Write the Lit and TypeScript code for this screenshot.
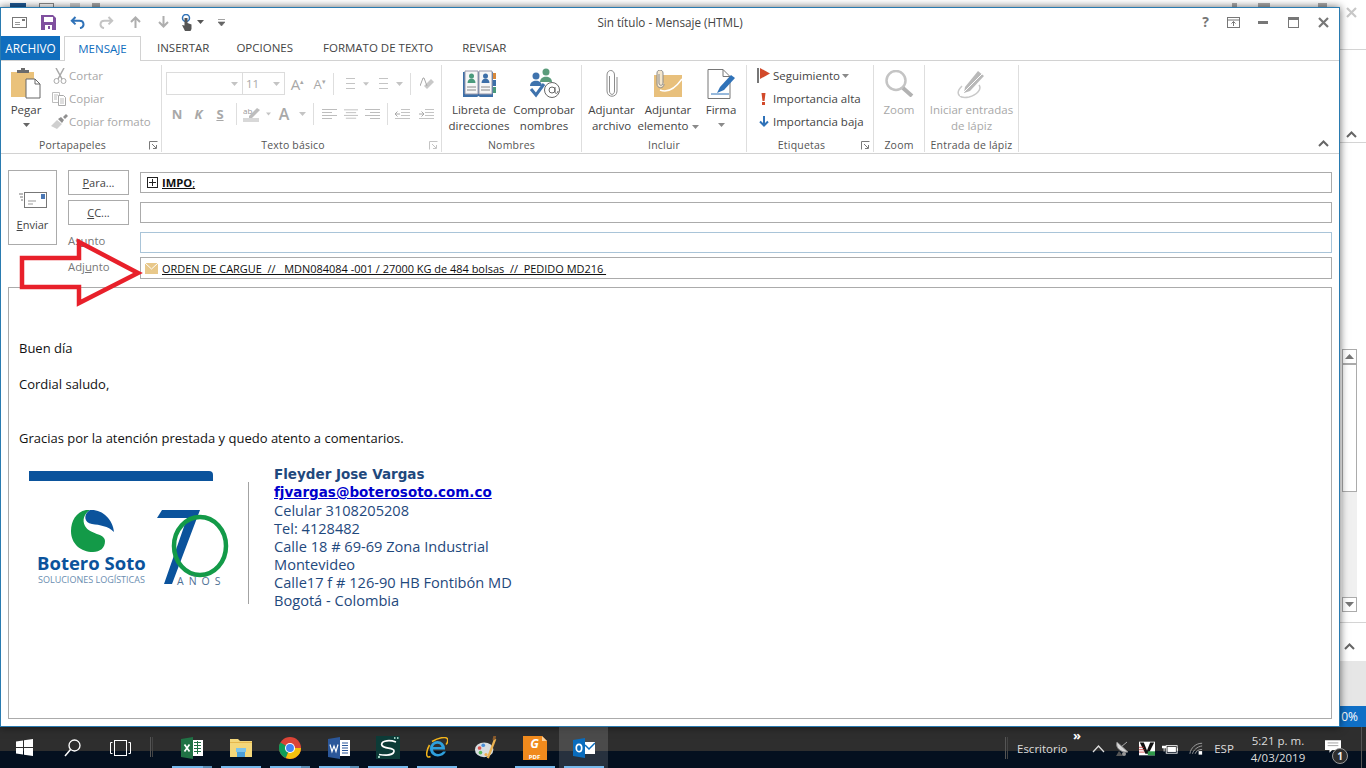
import {LitElement, html, css} from 'lit';
import {customElement} from 'lit/decorators.js';

const caret = (c = '#8a8a8a') => html`<svg class="caret" width="7" height="4" viewBox="0 0 7 4"><path d="M0 0h7L3.5 4z" fill=${c}/></svg>`;
const lightCaret = caret('#c4c4c4');

const launcher = (c = '#7a7a7a') => html`<svg class="launch" width="9" height="9" viewBox="0 0 9 9"><path d="M.5 8.5v-8h8M3 3l4 4M4 7.5h3.5V4" fill="none" stroke=${c}/></svg>`;

const chevUp = html`<svg width="11" height="7" viewBox="0 0 11 7"><path d="M1 6l4.5-4.5L10 6" fill="none" stroke="#666" stroke-width="2"/></svg>`;

const qat = {
  mail: html`<svg width="15" height="11" viewBox="0 0 15 11"><rect x=".5" y=".5" width="14" height="10" fill="#fff" stroke="#777"/><rect x="10" y="2" width="3" height="2" fill="#777"/><path d="M3 5.5h5M3 7.5h5" stroke="#999"/></svg>`,
  save: html`<svg width="15" height="15" viewBox="0 0 15 15"><path d="M0 0h12l3 3v12H0z" fill="#80509f"/><rect x="3" y="2" width="9" height="5" fill="#fff"/><rect x="4" y="10" width="7" height="5" fill="#fff"/><rect x="7" y="11" width="2" height="3" fill="#80509f"/></svg>`,
  undo: html`<svg width="15" height="13" viewBox="0 0 15 13"><path d="M5.5 1L1.8 4.7l3.7 3.7M2 4.7h7.5c5 0 5.5 6.5.5 7.5" fill="none" stroke="#2f72b8" stroke-width="2"/></svg>`,
  redo: html`<svg width="15" height="13" viewBox="0 0 15 13"><path d="M9.5 1l3.7 3.7-3.7 3.7M13 4.7H5.500c-5 0-5.500 6.500-.5 7.500" fill="none" stroke="#c4c4c4" stroke-width="2"/></svg>`,
  up: html`<svg width="11" height="12" viewBox="0 0 11 12"><path d="M5.5 12V2M1 6l4.5-4.5L10 6" fill="none" stroke="#aeaeae" stroke-width="2"/></svg>`,
  down: html`<svg width="11" height="12" viewBox="0 0 11 12"><path d="M5.5 0v10M1 6l4.5 4.5L10 6" fill="none" stroke="#aeaeae" stroke-width="2"/></svg>`,
  touch: html`<svg width="12" height="17" viewBox="0 0 12 17"><circle cx="5" cy="4" r="3.5" fill="none" stroke="#2f72b8" stroke-width="1.5"/><path d="M3.5 4h3v5l4 1.500V15l-1 2H4L1 11l2.500.5z" fill="#555"/></svg>`,
  more: html`<svg width="7" height="7" viewBox="0 0 7 7"><path d="M0 .5h7M0 3h7L3.5 7z" fill="#666" stroke="#666" stroke-width=".6"/></svg>`,
};

const ribbon = {
  paste: html`<svg width="30" height="32" viewBox="0 0 30 32"><path d="M0 4h23v25H0z" fill="#eac27b"/><path d="M6 5V2h4V0h4v2h4v3z" fill="#6b6b6b"/><path d="M15 11h9l5 5v14H15z" fill="#fff" stroke="#666"/><path d="M24 11v5h5" fill="none" stroke="#666"/></svg>`,
  cut: html`<svg width="14" height="16" viewBox="0 0 14 16"><path d="M3 0l6 11M11 0L5 11" stroke="#a9a9a9" stroke-width="1.5"/><circle cx="3.5" cy="13" r="2.5" fill="none" stroke="#a9a9a9"/><circle cx="10.5" cy="13" r="2.5" fill="none" stroke="#a9a9a9"/></svg>`,
  copy: html`<svg width="15" height="14" viewBox="0 0 15 14"><path d="M.5.5h7v10h-7z" fill="#fff" stroke="#bdbdbd"/><path d="M6.5 3.5h5l2 2v8h-7z" fill="#fff" stroke="#a9a9a9"/><path d="M2 3h4M2 5h3M2 7h3M8 7h4M8 9h4M8 11h4" stroke="#bdbdbd"/></svg>`,
  brush: html`<svg width="17" height="15" viewBox="0 0 17 15"><path d="M0 12l6-6 5 4-5 5z" fill="#cfcfcf"/><path d="M7 5l3-2 3 3-2 3z" fill="#8f8f8f"/><path d="M12 3l3-3 2 2-3 3z" fill="#8f8f8f"/></svg>`,
  book: html`<svg width="33" height="27" viewBox="0 0 33 27"><path d="M0 2h30v25H17l-1.500-1-1.500 1H0z" fill="#3d6fa8"/><path d="M2 1h13v23H2zM16 1h13v23H16z" fill="#f7f7f7" stroke="#99a"/><circle cx="8.500" cy="6" r="2.500" fill="#4a9a7c"/><path d="M4.500 13c0-6 8-6 8 0z" fill="#4a9a7c"/><circle cx="22.500" cy="6" r="2.500" fill="#3d6fa8"/><path d="M18.500 13c0-6 8-6 8 0z" fill="#3d6fa8"/><path d="M4 17h9M4 20h9M18 17h9M18 20h9" stroke="#888"/><path d="M30 3h3v6h-3z" fill="#d8893b"/><path d="M30 10h3v6h-3z" fill="#3d6fa8"/><path d="M30 17h3v6h-3z" fill="#4a9a7c"/></svg>`,
  check: html`<svg width="31" height="31" viewBox="0 0 31 31"><circle cx="17" cy="4" r="3.5" fill="#5b9c7b"/><path d="M11 14c0-7 12-7 12 0z" fill="#5b9c7b"/><circle cx="7" cy="8" r="3.5" fill="#3f73ad"/><path d="M1 18c0-7 12-7 12 0z" fill="#3f73ad"/><path d="M2 21l5 6 8-11" fill="none" stroke="#3f73ad" stroke-width="3"/><circle cx="23" cy="22" r="7.500" fill="#fff" stroke="#666"/><circle cx="23" cy="22" r="3" fill="none" stroke="#666"/><path d="M26 19v5c0 2 3 2 3-1" fill="none" stroke="#666"/></svg>`,
  clip: html`<svg width="12" height="27" viewBox="0 0 12 27"><path d="M3.500 6v15c0 4.500 5 4.500 5 0V5c0-6-7.500-6-7.500 0v16c0 7 10 7 10 0V7" fill="none" stroke="#8c8c8c"/></svg>`,
  mailclip: html`<svg width="28" height="27" viewBox="0 0 28 27"><path d="M0 5h28v22H0z" fill="#e8c07c"/><path d="M6 20c7 3 14 0 22-11" fill="none" stroke="#fff" stroke-width="1.500"/><path d="M5 4v9c0 3 4 3 4 0V3C9-1 3-1 3 3v11c0 5 7 5 7 0" fill="#f4e6cc" stroke="#8c8c8c"/></svg>`,
  sign: html`<svg width="28" height="30" viewBox="0 0 28 30"><path d="M1 .5h15l7 7v22H1z" fill="#fff" stroke="#777"/><path d="M16 .5v7h7" fill="none" stroke="#777"/><path d="M4 25h18" stroke="#2f72b8"/><path d="M10 24l3-6L24 6l4 3-11 12z" fill="#2f72b8"/></svg>`,
  flag: html`<svg width="13" height="15" viewBox="0 0 13 15"><rect width="2" height="15" fill="#777"/><path d="M3 0l10 5.500L3 11z" fill="#d2492a"/></svg>`,
  high: html`<svg width="5" height="12" viewBox="0 0 5 12"><path d="M.5 0h4l-1 8h-2z" fill="#d2492a"/><rect x="1" y="9" width="3" height="3" fill="#d2492a"/></svg>`,
  low: html`<svg width="10" height="11" viewBox="0 0 10 11"><path d="M5 0v9M1 5.500l4 4 4-4" fill="none" stroke="#2f72b8" stroke-width="2"/></svg>`,
  zoom: html`<svg width="29" height="27" viewBox="0 0 29 27"><circle cx="11" cy="10.500" r="9.500" fill="#fff" stroke="#c4c4c4" stroke-width="2.500"/><path d="M18 18l9 8" stroke="#b2b2b2" stroke-width="4"/></svg>`,
  ink: html`<svg width="30" height="31" viewBox="0 0 30 31"><path d="M8 19L21 3l6 5-14 15-6 2z" fill="#b9b9b9"/><path d="M5 18c-8 8-2 13 7 11 8-2 13-8 10-12" fill="none" stroke="#c9c9c9" stroke-width="1.500"/><path d="M3 28L25 6" stroke="#fff"/></svg>`,
};

const listIcon = (numbered = false) => html`<svg width="13" height="13" viewBox="0 0 13 13"><path d="M4 1.500h9M4 6.500h9M4 11.500h9" stroke="#c4c4c4"/>${numbered
  ? html`<path d="M1 0v3M0 5h2.500v1.500H0V8h2.500M0 10h2.500v3H0" fill="none" stroke="#b0b0b0" stroke-width=".8"/>`
  : html`<path d="M0 .5h2v2H0zM0 5.500h2v2H0zM0 10.500h2v2H0z" fill="#9a9a9a"/>`}</svg>`;

const alignIcon = (d: string) => html`<svg width="15" height="11" viewBox="0 0 15 11"><path d=${d} stroke="#bdbdbd"/></svg>`;
const indentIcon = (d: string) => html`<svg width="15" height="11" viewBox="0 0 15 11"><path d="M6 .5h9M6 3.500h9M6 6.500h9M0 9.500h15" stroke="#c4c4c4"/><path d=${d} fill="none" stroke="#a8a8a8"/></svg>`;

const growIcon = html`<span class="a-grow">A<sup>▴</sup></span>`;
const shrinkIcon = html`<span class="a-shrink">A<sup>▾</sup></span>`;
const eraseIcon = html`<svg width="15" height="14" viewBox="0 0 15 14"><path d="M7 12l7-7-3-3-7 7z" fill="#c8c8c8"/><path d="M0 9L3 1h1l3 8" fill="none" stroke="#a8a8a8"/></svg>`;
const markIcon = html`<svg width="17" height="16" viewBox="0 0 17 16"><rect y="12" width="16" height="4" fill="#d8d8d8"/><path d="M6 10l8-8 3 2-8 8H6z" fill="#bdbdbd"/><text x="0" y="8" font-size="8" fill="#999" font-family="Open Sans">ab</text></svg>`;

// [ancho de celda, contenido]; contenido null = separador vertical
type Cell = [number, unknown];

const fontRow1: Cell[] = [
  [25, growIcon],
  [19, shrinkIcon],
  [4, ''],
  [1, null],
  [29, listIcon()],
  [6, lightCaret],
  [24, listIcon(true)],
  [12, lightCaret],
  [5, ''],
  [1, null],
  [32, eraseIcon],
];

const fontRow2: Cell[] = [
  [22, html`<span class="fmt">N</span>`],
  [21, html`<span class="fmt it">K</span>`],
  [22, html`<span class="fmt un">S</span>`],
  [5, ''],
  [1, null],
  [29, markIcon],
  [5, lightCaret],
  [26, html`<span class="a-color">A</span>`],
  [10, lightCaret],
  [6, ''],
  [1, null],
  [30, alignIcon('M0 .5h15M0 3.500h10M0 6.500h15M0 9.500h10')],
  [14, alignIcon('M0 .5h15M2 3.500h11M0 6.500h15M2 9.500h11')],
  [29, alignIcon('M0 .5h15M5 3.500h10M0 6.500h15M5 9.500h10')],
  [1, null],
  [28, indentIcon('M5 5H0M2.500 2.500L0 5l2.500 2.500')],
  [20, indentIcon('M0 5h5M2.500 2.500L5 5 2.500 7.500')],
];

const task = {
  win: html`<svg width="17" height="17" viewBox="0 0 17 17"><path d="M0 2.500l7-1v6.500H0zM8 1.300L17 0v8H8zM0 9h7v6.500l-7-1zM8 9h9v8l-9-1.300z" fill="#fff"/></svg>`,
  search: html`<svg width="17" height="18" viewBox="0 0 17 18"><circle cx="10.500" cy="6.500" r="5.500" fill="none" stroke="#fff" stroke-width="1.300"/><path d="M6.500 10.500L1 17" stroke="#fff" stroke-width="1.500"/></svg>`,
  view: html`<svg width="21" height="16" viewBox="0 0 21 16"><rect x="4.500" y=".5" width="12" height="15" fill="none" stroke="#fff"/><path d="M2.500 2.500H.5v11h2M18.500 2.500h2v11h-2" fill="none" stroke="#fff"/></svg>`,
  excel: html`<svg width="22" height="22" viewBox="0 0 22 22"><path d="M11 3h11v16H11z" fill="#fff"/><path d="M13 5.500h7M13 8.500h7M13 11.500h7M13 14.500h7M16.500 4v13" stroke="#207245"/><path d="M0 2l12-2v22L0 20z" fill="#207245"/><path d="M3.500 7.500l5 7M8.500 7.500l-5 7" stroke="#fff" stroke-width="1.700"/></svg>`,
  folder: html`<svg width="22" height="18" viewBox="0 0 22 18"><path d="M0 0h8l2 2h12v16H0z" fill="#f4d77a"/><path d="M0 3h22v1H0z" fill="#e6b84e"/><rect x="7" y="11" width="8" height="7" fill="#4a9ed8"/><rect x="6" y="9" width="10" height="4" fill="#7cc3ea"/></svg>`,
  chrome: html`<svg width="22" height="22" viewBox="0 0 24 24"><circle cx="12" cy="12" r="12" fill="#db4437"/><path d="M12 12L1.500 6a12 12 0 0 0 6 17z" fill="#0f9d58"/><path d="M12 12h12a12 12 0 0 1-16.500 11z" fill="#f4c20d"/><circle cx="12" cy="12" r="5.500" fill="#fff"/><circle cx="12" cy="12" r="4.300" fill="#4285f4"/></svg>`,
  word: html`<svg width="22" height="22" viewBox="0 0 22 22"><path d="M11 3h11v16H11z" fill="#fff"/><path d="M14 6h6M14 8.500h6M14 11h6M14 13.500h6M14 16h6" stroke="#2b579a" stroke-width="1.200"/><path d="M0 2l12-2v22L0 20z" fill="#2b579a"/><path d="M2 7.500l2 7 2-5.500 2 5.500 2-7" fill="none" stroke="#fff" stroke-width="1.200"/></svg>`,
  sig: html`<svg width="24" height="23" viewBox="0 0 24 23"><rect width="24" height="23" fill="#0c3b37"/><path d="M20 6C11 3 4 6 6 9.500s13 2 12 6-9 4-15 3" fill="none" stroke="#fff" stroke-width="1.700"/><path d="M18 2h1.500M21 2h1.500M2 21h2" stroke="#cfe" stroke-width="1.500"/></svg>`,
  ie: html`<svg width="22" height="22" viewBox="0 0 22 22"><path d="M4 11.500a7.500 7.500 0 0 1 15 0v1H7c.5 5 7.500 6 10 2h3c-3 7-16 7-16-3zM7 10h8.500c-.5-4.500-7.500-4.500-8.500 0z" fill="#2ea0dd" fill-rule="evenodd"/><path d="M3.500 8C0 14-1 22 4.500 19.500M6 4.500C12 1 20-1 21.500 2c.5 2-.5 4.500-1.500 5.500" fill="none" stroke="#f2b41b" stroke-width="1.500"/></svg>`,
  paint: html`<svg width="24" height="24" viewBox="0 0 26 26"><ellipse cx="11" cy="15" rx="10" ry="8" fill="#d8dde0"/><circle cx="6" cy="13" r="2" fill="#d9534f"/><circle cx="10" cy="10" r="2" fill="#4a90d9"/><circle cx="7" cy="18" r="2" fill="#5cb85c"/><circle cx="13" cy="20" r="1.700" fill="#f0ad4e"/><path d="M15 24L23 3" stroke="#e8b050" stroke-width="2.500"/><path d="M21 0h3l-1 4h-3z" fill="#8a5a2b"/></svg>`,
  gpdf: html`<svg width="24" height="24" viewBox="0 0 24 24"><path d="M0 0h19l5 5v19H0z" fill="#f08a1d"/><path d="M19 0v5h5z" fill="#f9cf9b"/></svg>`,
  outlook: html`<svg width="22" height="20" viewBox="0 0 22 20"><path d="M10 4h12v12H10z" fill="#fff"/><path d="M12 7l4 4 6-6" fill="none" stroke="#0a6cbd" stroke-width="1.500"/><path d="M0 2l12-2v20L0 18z" fill="#0a6cbd"/><ellipse cx="6" cy="10" rx="2.700" ry="3.700" fill="none" stroke="#fff" stroke-width="1.700"/></svg>`,
  sat: html`<svg width="16" height="16" viewBox="0 0 16 16"><path d="M3 1c-2 6 4 11 11 10z" fill="#d8d8d8" stroke="#888"/><path d="M7 6l6-5" stroke="#aaa"/><path d="M5 10l-3 5h7z" fill="#555"/><circle cx="10" cy="13" r="2" fill="#999"/></svg>`,
  vapp: html`<svg width="16" height="15" viewBox="0 0 20 17"><rect width="20" height="17" fill="#fff"/><path d="M1 1l5 0 4 10 4-10 5 0-7 14H8z" fill="#111"/><path d="M0 7h6M0 10h7M0 13h7" stroke="#c33"/><rect x="11" y="12" width="9" height="5" fill="#2f9a4a"/></svg>`,
  batt: html`<svg width="16" height="12" viewBox="0 0 19 14"><rect x="5" y="3" width="13" height="9" fill="none" stroke="#fff"/><rect x="6.500" y="4.500" width="10" height="6" fill="#fff"/><path d="M18 6h1v3h-1z" fill="#fff"/><path d="M0 3h5v3H3v4H2V6H0z" fill="#fff"/></svg>`,
  wifi: html`<svg width="14" height="13" viewBox="0 0 16 14"><path d="M1 13C2 6 8 1 15 1M4 13c1-4 5-8 11-9M7 13c1-3 4-5 8-5" fill="none" stroke="#aaa"/><rect x="11" y="10" width="4" height="4" fill="#fff"/></svg>`,
  note: html`<svg width="16" height="13" viewBox="0 0 18 14"><path d="M0 0h18v11H8l-3 3v-3H0z" fill="#fff"/><path d="M3 3h12M3 6h12" stroke="#999"/></svg>`,
};

interface Small { icon: unknown; text: string; arrow?: boolean }

const clipboardRows: Small[] = [
  {icon: ribbon.cut, text: 'Cortar'},
  {icon: ribbon.copy, text: 'Copiar'},
  {icon: ribbon.brush, text: 'Copiar formato'},
];

const tagRows: Small[] = [
  {icon: ribbon.flag, text: 'Seguimiento', arrow: true},
  {icon: ribbon.high, text: 'Importancia alta'},
  {icon: ribbon.low, text: 'Importancia baja'},
];

const apps = [
  {icon: task.excel, line: 'line stack'},
  {icon: task.folder, line: 'line'},
  {icon: task.chrome, line: 'line stack'},
  {icon: task.word, line: 'line stack'},
  {icon: task.sig, line: 'line'},
  {icon: task.ie, line: 'line'},
  {icon: task.paint, line: ''},
  {icon: task.gpdf, line: 'line', pdf: true},
  {icon: task.outlook, line: 'line active'},
];

const signature = [
  'Celular 3108205208',
  'Tel: 4128482',
  'Calle 18 # 69-69 Zona Industrial',
  'Montevideo',
  'Calle17 f # 126-90 HB Fontibón MD',
  'Bogotá - Colombia',
];

@customElement('app-root')
export class AppRoot extends LitElement {
  static styles = css`
    :host {
      display: block;
      width: 1366px;
      height: 768px;
      overflow: hidden;
      font-family: 'Open Sans', 'Noto Sans', sans-serif;
      font-size: 11.5px;
      color: #444;
      background: #fff;
    }
    .desktop {
      position: relative;
      height: 727px;
      background: #fff;
    }
    .back-top {
      display: flex;
      height: 7px;
      overflow: hidden;
      padding-top: 3px;
      box-sizing: border-box;
    }
    .back-top i {
      display: block;
      height: 4px;
      flex: none;
    }
    .b-save { width: 16px; margin-left: 10px; background: #1f5a96; }
    .b-new { width: 15px; margin-left: 13px; border: 1px solid #888; border-bottom: 0; box-sizing: border-box; }
    .b-undo { width: 10px; margin-left: 16px; background: #d0d0d0; }
    .b-redo { width: 8px; margin-left: 12px; background: #a8a8a8; }
    .b-a { width: 5px; margin-left: 1132px; background: #aaa; }
    .b-b { width: 12px; margin-left: 21px; background: #aaa; }
    .b-c { width: 9px; margin-left: 48px; background: #aaa; }
    .rail {
      position: absolute;
      left: 1340px;
      top: 0;
      width: 26px;
      height: 727px;
      display: flex;
      flex-direction: column;
    }
    .rail > * { flex: none; box-sizing: border-box; }
    .rail-x {
      height: 50px;
      border-bottom: 1px solid #d4d4d4;
      padding: 6px 0 0 6px;
    }
    .rail-up {
      height: 93px;
      border-bottom: 1px solid #d4d4d4;
      display: flex;
      align-items: flex-end;
      padding-left: 6px;
    }
    .rail-up svg { margin-bottom: 4px; }
    .rail-gap { height: 206px; }
    .scroll {
      width: 15px;
      margin-left: 2px;
      display: flex;
      flex-direction: column;
      background: #f0f0f0;
      height: 263px;
    }
    .sb {
      height: 15px;
      box-sizing: border-box;
      border: 1px solid #ababab;
      background: #fff;
      display: flex;
      align-items: center;
      justify-content: center;
      flex: none;
    }
    .thumb {
      height: 128px;
      box-sizing: border-box;
      border: 1px solid #ababab;
      background: #fff;
      flex: none;
    }
    .track { flex: 1; }
    .rail-line {
      height: 11px;
      border-bottom: 1px solid #d4d4d4;
    }
    .rail-chev {
      height: 38px;
      padding: 15px 0 0 4px;
    }
    .rail-grey { height: 45px; background: #e6e6e6; }
    .rail-blue {
      height: 21px;
      background: #0f6fc6;
      color: #fff;
      font-size: 12px;
      line-height: 21px;
      white-space: nowrap;
      display: flex;
      justify-content: flex-end;
      padding-right: 8px;
    }
    .window {
      position: absolute;
      left: 0;
      top: 7px;
      width: 1340px;
      height: 720px;
      box-sizing: border-box;
      border: 1px solid #2a7bb0;
      background: #fff;
      box-shadow: 0 0 8px rgba(0, 0, 0, 0.6);
      display: flex;
      flex-direction: column;
    }
    .titlebar {
      height: 28px;
      display: grid;
      grid-template-columns: 1fr auto 1fr;
      align-items: center;
      flex: none;
    }
    .qat {
      display: flex;
      align-items: center;
      padding-left: 11px;
    }
    .qat svg { display: block; flex: none; }
    .q-save { margin-left: 14px; }
    .q-undo { margin-left: 14px; }
    .q-redo { margin-left: 14px; }
    .q-up { margin-left: 16px; }
    .q-down { margin-left: 17px; }
    .q-touch { margin-left: 12px; }
    .q-caret { margin-left: 4px; }
    .q-more { margin-left: 14px; }
    .title {
      font-size: 11.7px;
      color: #444;
    }
    .winctl {
      display: flex;
      justify-content: flex-end;
      align-items: center;
      padding-right: 10px;
    }
    .winctl svg { display: block; }
    .c-help { margin-right: 18px; font-weight: 700; font-size: 14px; color: #777; line-height: 14px; }
    .c-rest { margin-right: 18px; }
    .c-min { margin-right: 20px; }
    .c-max { margin-right: 19px; }
    .tabs {
      height: 25px;
      flex: none;
      box-sizing: border-box;
      border-bottom: 1px solid #d2d2d2;
      display: flex;
      line-height: 24px;
    }
    .tab-file {
      width: 59px;
      height: 24px;
      background: #106ebe;
      color: #fff;
      text-align: center;
      font-size: 11.8px;
    }
    .tab {
      padding: 0 14px;
      white-space: nowrap;
    }
    .tab-on {
      margin-left: 4px;
      width: 77px;
      height: 25px;
      padding: 0;
      text-align: center;
      box-sizing: border-box;
      border: 1px solid #d2d2d2;
      border-bottom: 0;
      background: #fff;
      color: #106ebe;
      margin-right: 1px;
    }
    .t-ins { margin-left: 1px; margin-right: -1px; }
    .t-fmt { margin-left: 2px; }
    .t-rev { margin-left: 1px; }
    .ribbon {
      height: 93px;
      flex: none;
      box-sizing: border-box;
      border-bottom: 1px solid #d2d2d2;
      padding-top: 4px;
      display: flex;
      position: relative;
    }
    .collapse {
      position: absolute;
      right: 10px;
      bottom: 3px;
    }
    .group {
      height: 87px;
      box-sizing: border-box;
      border-right: 1px solid #dedede;
      display: flex;
      flex-direction: column;
      position: relative;
      flex: none;
    }
    .g-clip { width: 161px; }
    .g-text { width: 280px; }
    .g-names { width: 140px; }
    .g-inc { width: 165px; }
    .g-tags { width: 127px; }
    .g-zoom { width: 51px; }
    .g-ink { width: 94px; }
    .g-body {
      flex: 1;
      display: flex;
    }
    .g-label {
      height: 14px;
      line-height: 14px;
      text-align: center;
      font-size: 10.5px;
      color: #555;
      letter-spacing: 0.2px;
      white-space: nowrap;
    }
    .g-label.short { padding-right: 17px; }
    .launch {
      position: absolute;
      right: 3px;
      bottom: 2px;
    }
    .big {
      display: flex;
      flex-direction: column;
      align-items: center;
      flex: none;
      text-align: center;
      line-height: 16px;
      white-space: nowrap;
    }
    .big-icon {
      height: 37px;
      display: flex;
      align-items: center;
      justify-content: center;
      flex: none;
    }
    .big > .caret { margin-top: 5px; }
    .big .inline { margin-left: 3px; vertical-align: middle; }
    .off { color: #a8a8a8; }
    .w-paste { width: 50px; }
    .w-book { width: 74px; }
    .w-check { width: 56px; }
    .w-att1 { width: 59px; }
    .w-att2 { width: 54px; }
    .w-sign { width: 52px; }
    .w-zoom { width: 50px; }
    .w-ink { width: 93px; }
    .smalls {
      display: flex;
      flex-direction: column;
      margin-top: -1px;
    }
    .small {
      height: 23px;
      display: flex;
      align-items: center;
      white-space: nowrap;
    }
    .sm-icon {
      width: 17px;
      display: flex;
      justify-content: center;
      flex: none;
    }
    .smalls-clip { color: #a8a8a8; }
    .smalls-clip .sm-icon { margin-right: 1px; }
    .smalls-tags { margin-left: 8px; }
    .smalls-tags .sm-icon { margin-right: 1px; }
    .small .caret { margin-left: 2px; }
    .font-rows {
      display: flex;
      flex-direction: column;
      padding-top: 7px;
      padding-left: 4px;
    }
    .row {
      display: flex;
      align-items: center;
      height: 23px;
    }
    .row2 { margin-top: 8px; height: 22px; }
    .combo {
      height: 23px;
      box-sizing: border-box;
      border: 1px solid #dcdcdc;
      display: flex;
      align-items: center;
      justify-content: flex-end;
      padding-right: 4px;
      color: #a8a8a8;
    }
    .combo-font { width: 77px; }
    .combo-size { width: 43px; margin-left: -1px; justify-content: space-between; padding-left: 3px; }
    .cell {
      display: flex;
      align-items: center;
      justify-content: center;
      flex: none;
      color: #a8a8a8;
      height: 22px;
    }
    .vsep {
      width: 1px;
      height: 22px;
      background: #dedede;
      flex: none;
    }
    .a-grow { font-size: 15px; }
    .a-shrink { font-size: 13px; }
    .a-grow sup, .a-shrink sup { font-size: 7px; }
    .fmt { font-size: 13px; font-weight: 700; }
    .it { font-style: italic; }
    .un { text-decoration: underline; }
    .a-color { font-size: 16px; font-weight: 600; }
    .compose {
      display: grid;
      grid-template-columns: 49px 61px 1192px;
      grid-template-rows: 30px 30px 25px 26px;
      column-gap: 11px;
      padding: 16px 0 0 7px;
      flex: none;
    }
    .send {
      grid-row: 1 / span 3;
      height: 75px;
      box-sizing: border-box;
      border: 1px solid #ababab;
      display: flex;
      flex-direction: column;
      align-items: center;
      padding-top: 21px;
      font-size: 11px;
    }
    .send svg { margin-bottom: 7px; }
    .send-btn {
      grid-column: 2;
      height: 25px;
      box-sizing: border-box;
      border: 1px solid #ababab;
      text-align: center;
      line-height: 23px;
      font-size: 11px;
    }
    .lbl {
      grid-column: 2;
      font-size: 11.3px;
      color: #777;
      line-height: 22px;
      white-space: nowrap;
    }
    .lbl2 { line-height: 24px; }
    u { text-decoration-thickness: 1px; }
    .field {
      margin-top: 2px;
      height: 21px;
      box-sizing: border-box;
      border: 1px solid #ababab;
      display: flex;
      align-items: center;
      padding-left: 6px;
      color: #111;
      font-size: 11px;
    }
    .field-sub { border-color: #a9c4d8; }
    .field-att { height: 22px; padding-left: 4px; }
    .plus {
      width: 11px;
      height: 11px;
      box-sizing: border-box;
      border: 1px solid #222;
      margin-right: 4px;
      flex: none;
    }
    .plus svg { display: block; }
    .strong { font-weight: 700; text-decoration: underline; font-size: 11.2px; }
    .semi { font-weight: 400; }
    .att-icon { margin-right: 4px; flex: none; }
    .att {
      text-decoration: underline;
      white-space: pre;
      font-size: 10.96px;
    }
    .body {
      margin: 6px 7px 0 7px;
      height: 432px;
      box-sizing: border-box;
      border: 1px solid #ababab;
      padding: 51px 0 0 10px;
      font-size: 13px;
      line-height: 18px;
      color: #111;
      flex: none;
    }
    .body p { margin: 0 0 18px; }
    .sp { height: 18px; }
    .sig { display: flex; }
    .sig svg { display: block; flex: none; }
    .sig-text {
      margin-left: 10px;
      font-size: 14.6px;
      color: #1f497d;
      line-height: 18px;
      white-space: nowrap;
    }
    .sig-name, .sig-mail {
      font-family: 'DejaVu Sans', sans-serif;
      font-weight: 700;
      font-size: 13.5px;
    }
    .sig-mail {
      color: #0000cc;
      text-decoration: underline;
      display: block;
    }
    .arrow {
      position: absolute;
      left: 0;
      top: 0;
      pointer-events: none;
    }
    .taskbar {
      height: 41px;
      display: flex;
      background: linear-gradient(#2e2e2e 0 24px, #04101f 24px);
      color: #ddd;
    }
    .tb {
      width: 48px;
      display: flex;
      align-items: center;
      justify-content: center;
      flex: none;
    }
    .tb-sep {
      width: 3px;
      height: 20px;
      margin: 10px 14px 0 6px;
      flex: none;
      border-left: 1px solid #555;
      border-right: 1px solid #444;
      box-sizing: border-box;
    }
    .app {
      width: 49px;
      height: 41px;
      display: flex;
      align-items: center;
      justify-content: center;
      flex: none;
      position: relative;
    }
    .app.line::after {
      content: '';
      position: absolute;
      left: 5px;
      right: 4px;
      bottom: 0;
      height: 2px;
      background: #76b9ed;
    }
    .app.stack::after {
      background: linear-gradient(90deg, #76b9ed 0 31px, #5a8db5 31px);
    }
    .app.active { background: rgba(255, 255, 255, 0.14); }
    .pdf {
      position: absolute;
      left: 0;
      right: 0;
      top: 10px;
      text-align: center;
      color: #fff;
      font-weight: 700;
      font-style: italic;
      font-size: 12.5px;
      line-height: 14px;
    }
    .pdf small {
      display: block;
      margin-top: 1.5px;
      font-size: 6px;
      line-height: 8px;
      font-style: normal;
    }
    .tray {
      margin-left: auto;
      display: flex;
      align-items: center;
      height: 41px;
    }
    .tray-sep {
      width: 3px;
      height: 22px;
      border-left: 1px solid #555;
      border-right: 1px solid #444;
      box-sizing: border-box;
      margin-right: 9px;
    }
    .desk { width: 49px; padding-top: 2px; white-space: nowrap; font-size: 11.5px; flex: none; }
    .dbl { width: 25px; height: 41px; padding: 2px 0 0 7px; font-size: 13px; font-weight: 700; color: #fff; box-sizing: border-box; line-height: 13px; flex: none; }
    .ti {
      display: flex;
      justify-content: center;
      align-items: center;
      flex: none;
      height: 41px;
      padding-top: 2px;
      box-sizing: border-box;
    }
    .t-chev { width: 14px; margin-right: 4px; }
    .t-sat { width: 26px; }
    .t-v { width: 24px; }
    .t-batt { width: 22px; }
    .t-wifi { width: 30px; }
    .t-esp { width: 26px; font-size: 11.5px; }
    .clock {
      width: 78px;
      text-align: center;
      font-size: 11.5px;
      line-height: 17px;
      flex: none;
      margin: 2px 4px 0 2px;
    }
    .notif {
      width: 40px;
      position: relative;
      height: 41px;
      flex: none;
    }
    .notif svg { position: absolute; left: 4px; top: 13px; }
    .badge {
      position: absolute;
      left: 11px;
      top: 21px;
      width: 16px;
      height: 16px;
      border-radius: 50%;
      border: 1px solid #999;
      box-sizing: border-box;
      background: #2e2e2e;
      color: #eee;
      font-size: 10px;
      font-weight: 700;
      line-height: 14px;
      text-align: center;
    }
    .end-sep {
      width: 1px;
      height: 41px;
      background: #555;
      flex: none;
      margin-right: 4px;
    }
  `;

  private smallRow(r: Small) {
    return html`<div class="small"><span class="sm-icon">${r.icon}</span>${r.text}${r.arrow ? caret() : ''}</div>`;
  }

  private cells(row: Cell[]) {
    return row.map(([w, c]) => c === null
      ? html`<div class="vsep"></div>`
      : html`<div class="cell" style="width:${w}px">${c}</div>`);
  }

  private fontRows() {
    return html`<div class="font-rows">
      <div class="row">
        <div class="combo combo-font">${lightCaret}</div>
        <div class="combo combo-size"><span>11</span>${lightCaret}</div>
        ${this.cells(fontRow1)}
      </div>
      <div class="row row2">${this.cells(fontRow2)}</div>
    </div>`;
  }

  private ribbon() {
    return html`<div class="ribbon">
      <div class="group g-clip">
        <div class="g-body">
          <div class="big w-paste">
            <div class="big-icon">${ribbon.paste}</div>
            <div>Pegar</div>
            ${caret('#666')}
          </div>
          <div class="smalls smalls-clip">${clipboardRows.map((r) => this.smallRow(r))}</div>
        </div>
        <div class="g-label short">Portapapeles</div>
        ${launcher()}
      </div>
      <div class="group g-text">
        <div class="g-body">${this.fontRows()}</div>
        <div class="g-label short">Texto básico</div>
        ${launcher('#c4c4c4')}
      </div>
      <div class="group g-names">
        <div class="g-body">
          <div class="big w-book"><div class="big-icon">${ribbon.book}</div><div>Libreta de<br>direcciones</div></div>
          <div class="big w-check"><div class="big-icon">${ribbon.check}</div><div>Comprobar<br>nombres</div></div>
        </div>
        <div class="g-label">Nombres</div>
      </div>
      <div class="group g-inc">
        <div class="g-body">
          <div class="big w-att1"><div class="big-icon">${ribbon.clip}</div><div>Adjuntar<br>archivo</div></div>
          <div class="big w-att2"><div class="big-icon">${ribbon.mailclip}</div><div>Adjuntar<br>elemento<svg class="inline" width="7" height="4" viewBox="0 0 7 4"><path d="M0 0h7L3.5 4z" fill="#8a8a8a"/></svg></div></div>
          <div class="big w-sign"><div class="big-icon">${ribbon.sign}</div><div>Firma</div>${caret()}</div>
        </div>
        <div class="g-label">Incluir</div>
      </div>
      <div class="group g-tags">
        <div class="g-body"><div class="smalls smalls-tags">${tagRows.map((r) => this.smallRow(r))}</div></div>
        <div class="g-label short">Etiquetas</div>
        ${launcher()}
      </div>
      <div class="group g-zoom">
        <div class="g-body"><div class="big w-zoom off"><div class="big-icon">${ribbon.zoom}</div><div>Zoom</div></div></div>
        <div class="g-label">Zoom</div>
      </div>
      <div class="group g-ink">
        <div class="g-body"><div class="big w-ink off"><div class="big-icon">${ribbon.ink}</div><div>Iniciar entradas<br>de lápiz</div></div></div>
        <div class="g-label">Entrada de lápiz</div>
      </div>
      <div class="collapse">${chevUp}</div>
    </div>`;
  }

  private compose() {
    return html`<div class="compose">
      <div class="send">
        <svg width="28" height="18" viewBox="0 0 28 18"><rect x="5.500" y=".5" width="22" height="15" fill="#fff" stroke="#777"/><rect x="22" y="2" width="4" height="5" fill="#4a77b4"/><path d="M9 9h8M9 12h5" stroke="#999"/><path d="M0 2h4M1 5h3M2 8h2" stroke="#777"/></svg>
        <div><u>E</u>nviar</div>
      </div>
      <div class="send-btn"><u>P</u>ara...</div>
      <div class="field"><span class="plus"><svg width="9" height="9" viewBox="0 0 9 9"><path d="M1 4.500h7M4.500 1v7" stroke="#222"/></svg></span><span class="strong">IMPO</span><span class="strong semi">;</span></div>
      <div class="send-btn"><u>C</u>C...</div>
      <div class="field"></div>
      <div class="lbl">As<u>u</u>nto</div>
      <div class="field field-sub"></div>
      <div class="lbl lbl2">Adj<u>u</u>nto</div>
      <div class="field field-att">
        <svg class="att-icon" width="13" height="11" viewBox="0 0 13 11"><rect width="13" height="11" fill="#e8c88a"/><path d="M0 0l6.500 6L13 0" fill="none" stroke="#fff"/></svg>
        <span class="att">ORDEN DE CARGUE  //   MDN084084 -001 / 27000 KG de 484 bolsas  //  PEDIDO MD216 </span>
      </div>
    </div>`;
  }

  private logo() {
    return html`<svg width="245" height="145" viewBox="19 465 245 145">
      <path d="M29 471h180q4 0 4 4v6H29z" fill="#0b539c"/>
      <rect x="248" y="482" width="1" height="122" fill="#a3a3a3"/>
      <path d="M86 510C76 512 71 521 71 531c0 13 10 21 22 21 7 0 12-4 12-11 0-8-15-6-20-15-3-6-1-12 5-16z" fill="#139a48"/>
      <path d="M90 510c12-1 23 9 24 22-6-6-14-7-22-8-8-1-9-10-2-14z" fill="#0b539c"/>
      <path d="M162 510h38l-28 74h-8l23-66h-30z" fill="#0b539c"/>
      <ellipse cx="200" cy="546" rx="26" ry="29" fill="none" stroke="#139a48" stroke-width="4.500"/>
      <text x="37" y="570" font-family="Open Sans" font-weight="700" font-size="18.500" fill="#0b539c">Botero Soto</text>
      <text x="38" y="583" font-family="Open Sans" font-size="9" fill="#6a8db0">SOLUCIONES LOGÍSTICAS</text>
      <text x="177" y="585" font-family="Open Sans" font-size="10.500" letter-spacing="5" fill="#4d6f94">AÑOS</text>
    </svg>`;
  }

  private taskbar() {
    return html`<div class="taskbar">
      <div class="tb">${task.win}</div>
      <div class="tb">${task.search}</div>
      <div class="tb">${task.view}</div>
      <div class="tb-sep"></div>
      ${apps.map((a) => html`<div class="app ${a.line}">
        ${a.icon}
        ${a.pdf ? html`<div class="pdf">G<small>PDF</small></div>` : ''}
      </div>`)}
      <div class="tray">
        <div class="tray-sep"></div>
        <div class="desk">Escritorio</div>
        <div class="dbl">»</div>
        <div class="ti t-chev"><svg width="13" height="8" viewBox="0 0 13 8"><path d="M1 7l5.500-6L12 7" fill="none" stroke="#ddd" stroke-width="1.300"/></svg></div>
        <div class="ti t-sat">${task.sat}</div>
        <div class="ti t-v">${task.vapp}</div>
        <div class="ti t-batt">${task.batt}</div>
        <div class="ti t-wifi">${task.wifi}</div>
        <div class="ti t-esp">ESP</div>
        <div class="clock">5:21 p. m.<br>4/03/2019</div>
        <div class="notif">${task.note}<div class="badge">1</div></div>
        <div class="end-sep"></div>
      </div>
    </div>`;
  }

  render() {
    return html`
      <div class="desktop">
        <div class="back-top">
          <i class="b-save"></i><i class="b-new"></i><i class="b-undo"></i><i class="b-redo"></i>
          <i class="b-a"></i><i class="b-b"></i><i class="b-c"></i>
        </div>
        <div class="rail">
          <div class="rail-x"><svg width="11" height="11" viewBox="0 0 11 11"><path d="M1 1l9 9M10 1l-9 9" stroke="#c8c8c8" stroke-width="2.200"/></svg></div>
          <div class="rail-up">${chevUp}</div>
          <div class="rail-gap"></div>
          <div class="scroll">
            <div class="sb"><svg width="9" height="5" viewBox="0 0 9 5"><path d="M4.500 0L9 5H0z" fill="#777"/></svg></div>
            <div class="thumb"></div>
            <div class="track"></div>
            <div class="sb"><svg width="9" height="5" viewBox="0 0 9 5"><path d="M0 0h9L4.500 5z" fill="#777"/></svg></div>
          </div>
          <div class="rail-line"></div>
          <div class="rail-chev">${chevUp}</div>
          <div class="rail-grey"></div>
          <div class="rail-blue">0%</div>
        </div>
        <div class="window">
          <div class="titlebar">
            <div class="qat">
              ${qat.mail}
              <span class="q-save">${qat.save}</span>
              <span class="q-undo">${qat.undo}</span>
              <span class="q-redo">${qat.redo}</span>
              <span class="q-up">${qat.up}</span>
              <span class="q-down">${qat.down}</span>
              <span class="q-touch">${qat.touch}</span>
              <span class="q-caret">${caret('#555')}</span>
              <span class="q-more">${qat.more}</span>
            </div>
            <div class="title">Sin título - Mensaje (HTML)</div>
            <div class="winctl">
              <span class="c-help">?</span>
              <svg class="c-rest" width="13" height="11" viewBox="0 0 13 11"><rect x=".5" y=".5" width="12" height="10" fill="none" stroke="#777"/><path d="M1 3h11M6.500 9V4.500M4.500 6.500l2-2 2 2" fill="none" stroke="#777"/></svg>
              <svg class="c-min" width="10" height="3" viewBox="0 0 10 3"><rect width="10" height="3" fill="#777"/></svg>
              <svg class="c-max" width="11" height="11" viewBox="0 0 11 11"><rect x=".5" y=".5" width="10" height="10" fill="none" stroke="#777"/><rect width="11" height="3" fill="#777"/></svg>
              <svg width="11" height="11" viewBox="0 0 11 11"><path d="M1 1l9 9M10 1l-9 9" stroke="#777" stroke-width="2.200"/></svg>
            </div>
          </div>
          <div class="tabs">
            <div class="tab-file">ARCHIVO</div>
            <div class="tab tab-on">MENSAJE</div>
            <div class="tab t-ins">INSERTAR</div>
            <div class="tab">OPCIONES</div>
            <div class="tab t-fmt">FORMATO DE TEXTO</div>
            <div class="tab t-rev">REVISAR</div>
          </div>
          ${this.ribbon()}
          ${this.compose()}
          <div class="body">
            <p>Buen día</p>
            <p>Cordial saludo,</p>
            <div class="sp"></div>
            <p>Gracias por la atención prestada y quedo atento a comentarios.</p>
            <div class="sig">
              ${this.logo()}
              <div class="sig-text">
                <div class="sig-name">Fleyder Jose Vargas</div>
                <a class="sig-mail">fjvargas@boterosoto.com.co</a>
                ${signature.map((l) => html`<div>${l}</div>`)}
              </div>
            </div>
          </div>
        </div>
        <svg class="arrow" width="150" height="310" viewBox="0 0 150 310">
          <path d="M22 258h57v-16l59 31-59 30v-16H22z" fill="none" stroke="#e8202a" stroke-width="4.5"/>
        </svg>
      </div>
      ${this.taskbar()}
    `;
  }
}
